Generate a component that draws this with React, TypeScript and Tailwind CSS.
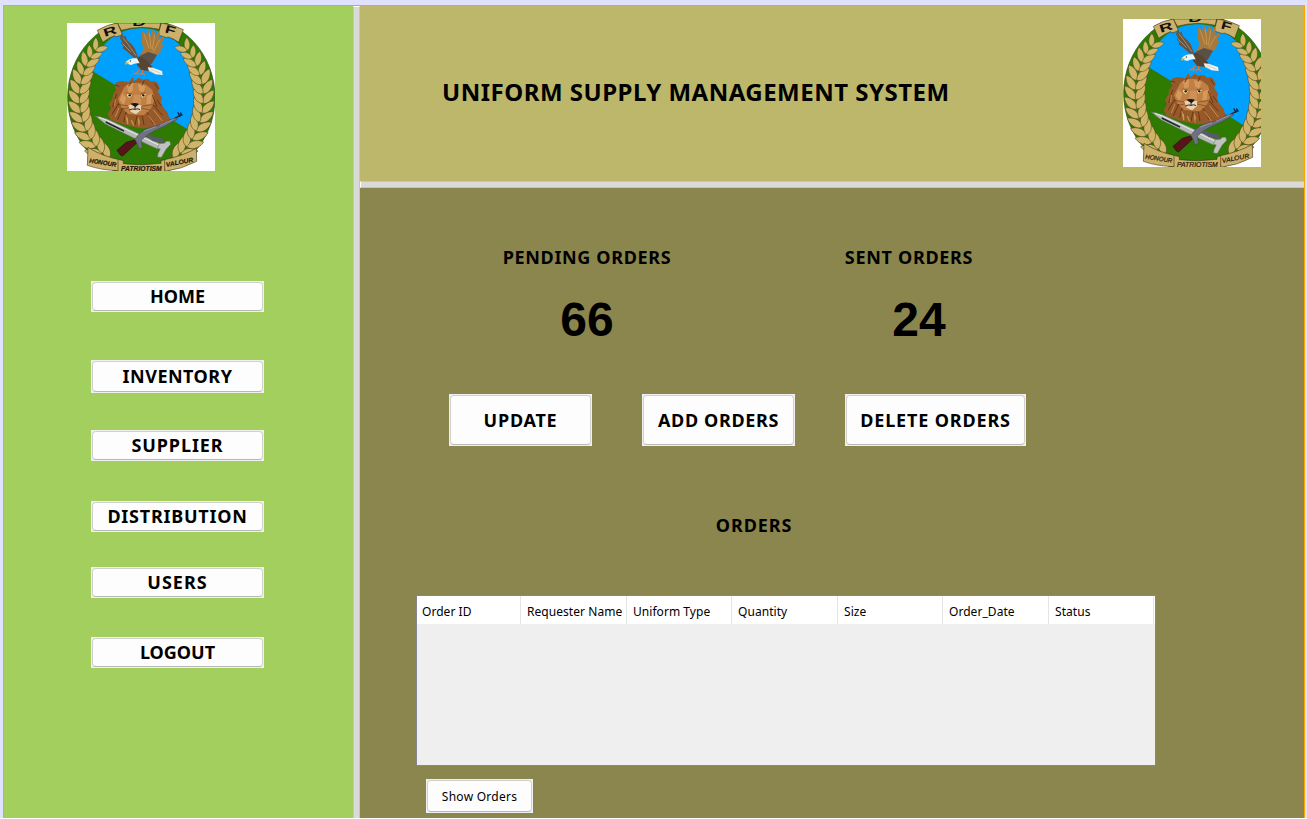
import React from "react";

type Leaf = { x: number; y: number; a: number; k: number };

const LEAVES: Leaf[] = [];
for (let i = 0; i < 14; i++) {
  const deg = -58 + i * 7.7;
  const t = (deg * Math.PI) / 180;
  const x = 244 - 185 * Math.cos(t);
  const y = 250 - 214 * Math.sin(t);
  const a = (Math.atan2(214 * Math.cos(t), 185 * Math.sin(t)) * 180) / Math.PI;
  LEAVES.push({ x, y, a, k: i > 11 ? 0.75 : i > 9 ? 0.88 : 1 });
}

const LEAF = "M0 0C6 -15 30 -21 52 -7C38 10 12 13 0 0Z";

function Branch() {
  return (
    <g fill="#d0b468" stroke="#4a431f" strokeWidth="1.6">
      {LEAVES.map((l, i) => (
        <g key={i} transform={`translate(${l.x} ${l.y}) rotate(${-l.a}) scale(${l.k})`}>
          <path d={LEAF} transform="rotate(-29)" />
          <path d={LEAF} transform="rotate(29) scale(1 -1)" />
        </g>
      ))}
    </g>
  );
}

function Emblem({ className, viewBox }: { className: string; viewBox: string }) {
  return (
    <svg className={className} viewBox={viewBox} fontFamily="Liberation Sans, sans-serif">
      <rect x="21" y="24" width="444" height="444" fill="#fff" />
      <ellipse cx="244" cy="247" rx="221" ry="237" fill="#2f7a00" stroke="#234d10" strokeWidth="2" />
      <path d="M92 165C112 100 160 40 244 40C340 40 420 130 420 250C420 290 410 330 400 353Z" fill="#00a0ff" />
      <Branch />
      <g transform="translate(488 0) scale(-1 1)">
        <Branch />
      </g>

      <g stroke="#3b3215" strokeWidth="1.8" fill="#cdb069">
        <path d="M172 24L302 24L298 43Q240 30 184 46Z" />
        <path d="M112 46Q142 28 172 24L188 60L166 66L164 62Q146 68 128 82Z" />
        <path d="M304 24Q340 28 370 44L356 82Q340 70 324 66L320 68L294 60Z" />
      </g>
      <g fontWeight="bold" fontSize="34" fill="#111">
        <text transform="translate(134 66) rotate(-18)" textLength="40" lengthAdjust="spacingAndGlyphs">R</text>
        <text x="217" y="34" textLength="41" lengthAdjust="spacingAndGlyphs">D</text>
        <text transform="translate(313 52) rotate(16)" textLength="32" lengthAdjust="spacingAndGlyphs">F</text>
      </g>

      <g>
        <path d="M184 56L192 66L196 61L201 76L213 86L224 100L234 126L222 128L202 110L187 99L191 94L181 85L187 81L180 70Z" fill="#665443" />
        <path d="M188 68L204 88L228 122M186 84L212 110" stroke="#a98b66" strokeWidth="3" fill="none" />
        <path d="M239 124L250 101L244 78L246 52L252 48L257 66L262 44L269 47L270 66L278 45L285 48L284 69L295 49L300 54L295 76L309 64L313 70L302 89L313 88L301 105L303 111L287 124L276 146L253 151Z" fill="#a8793d" />
        <path d="M252 56L267 100M268 54L273 102M284 58L277 104M299 74L280 110" stroke="#c59552" strokeWidth="3" fill="none" />
        <path d="M240 122L264 111L291 119L275 146L252 151Z" fill="#5b5048" />
        <path d="M224 131L240 124L264 140L278 156L268 168L245 166L232 151Z" fill="#594430" />
        <path d="M197 141Q209 127 231 130L239 145Q223 143 214 150L203 147Z" fill="#e9f5fa" />
        <path d="M194 143L207 141L204 147L196 149Z" fill="#dba92d" />
        <circle cx="211" cy="138" r="2" fill="#234" />
        <path d="M263 157L278 158L306 168L308 180L286 178L267 168Z" fill="#f6f0e2" />
        <path d="M272 162L302 175M268 166L286 177" stroke="#aaa" strokeWidth="1.5" />
        <path d="M236 165L232 173L220 177M234 172L232 181M248 165L247 174L238 179M247 174L255 181" fill="none" stroke="#db7544" strokeWidth="4" />
      </g>

      <path d="M187 198L207 202L218 187L222 199L236 188L248 194L265 192L271 199Q295 194 299 221L294 230L306 249L302 260L309 276L323 294L329 314L306 338L240 340L209 333L184 326L152 314L143 298L153 279L147 266L157 252L160 236L169 225Q158 210 171 201Z" fill="#96592a" />
      <path d="M193 216Q220 195 258 209L277 225L284 255L271 284L251 301L205 297L184 277L174 252Z" fill="#c08045" />
      <path d="M200 210L220 204L218 228L206 234ZM234 207L257 213L250 232L238 228ZM187 235L199 249L191 270L179 255ZM261 242L276 236L272 267L259 268Z" fill="#d4995b" />
      <path d="M165 210L178 214M284 205L295 222M170 236L158 276M176 265L156 298M188 279L172 315M198 291L191 321M277 240L291 276M279 269L307 301M261 292L279 326M247 302L252 331M231 303L225 330M291 255L303 272M214 202L206 214M253 196L246 211" stroke="#6b3716" strokeWidth="3" fill="none" />
      <path d="M166 252L164 274M177 278L166 306M197 301L202 321M280 284L307 318M265 301L286 330M235 308L237 334" stroke="#c98e50" strokeWidth="3" fill="none" />
      <path d="M222 239L241 239L244 266L218 267Z" fill="#cb9158" />
      <path d="M205 271Q222 264 245 271L242 286L228 298L212 290Z" fill="#e6d3b4" />
      <path d="M211 266Q226 261 237 267L226 277Z" fill="#181513" />
      <path d="M225 276V283M208 285Q218 280 225 283Q234 279 240 284" fill="none" stroke="#38221a" strokeWidth="3" />
      <path d="M202 235L216 241L209 249L201 243ZM243 241L257 236L255 244L247 248Z" fill="#f3df9d" />
      <circle cx="209" cy="241" r="3.5" fill="#16110c" />
      <circle cx="250" cy="241" r="3.5" fill="#16110c" />
      <path d="M199 234L215 237M242 237L257 233M205 273L174 268M206 279L181 283M243 274L276 269M243 279L273 286" stroke="#5a3014" strokeWidth="1.5" />
      <path d="M202 308L203 328M214 316L221 331M236 314L238 325" stroke="#b7a43c" strokeWidth="4" />

      <path d="M106 303L140 311L226 351L300 386L292 402L215 366L136 327Z" fill="#b4b8b6" stroke="#6b706f" strokeWidth="1.5" />
      <path d="M116 306L140 316L221 354L298 391" stroke="#e9ecea" strokeWidth="3" fill="none" />
      <path d="M137 321L192 348" stroke="#222a29" strokeWidth="5" />
      <path d="M298 386L313 385L319 379L329 379L332 388L318 403L304 427L293 426L294 416L301 402L292 400Z" fill="#bfc2c1" stroke="#747978" strokeWidth="1.5" />
      <path d="M171 406L199 382L226 374L229 385L188 423L181 420Z" fill="#581519" stroke="#271013" strokeWidth="2" />
      <path d="M224 373L240 354L259 341L304 328L349 306L353 312L314 334L290 344L265 358L244 375L247 398L237 401L231 384Z" fill="#707085" stroke="#3f414d" strokeWidth="1.5" />
      <path d="M257 362L268 358L281 365L309 371L309 384L278 378Z" fill="#59586f" />
      <path d="M251 349L288 335M300 331L340 313" stroke="#9c9daa" strokeWidth="2.5" />
      <path d="M346 309L366 298M353 292L361 305M361 293L367 302" stroke="#142035" strokeWidth="4" />

      <g stroke="#3b3215" strokeWidth="1.8" fill="#cdb069">
        <path d="M84 397Q124 423 182 435L176 467Q124 466 82 451Z" />
        <path d="M409 400Q366 424 308 435L315 469Q364 463 410 439Z" />
        <path d="M174 433L190 437L190 446Q246 453 303 445L303 437L314 434L314 475L174 475Z" />
      </g>
      <g fontStyle="italic" fontSize="19" fill="#1c180a" stroke="#1c180a" strokeWidth="0.6">
        <text transform="translate(87 443) rotate(9)" textLength="82" lengthAdjust="spacingAndGlyphs">HONOUR</text>
        <text x="183" y="469" textLength="122" lengthAdjust="spacingAndGlyphs">PATRIOTISM</text>
        <text transform="translate(319 456) rotate(-11)" textLength="83" lengthAdjust="spacingAndGlyphs">VALOUR</text>
      </g>
    </svg>
  );
}

function Button({ label, className, spacing = "" }: { label: string; className: string; spacing?: string }) {
  return (
    <button className={`block shrink-0 bg-[#f0f0f0] p-px ${className}`}>
      <span className="flex h-full w-full items-center justify-center rounded-[4px] border border-[#d0d0d0] border-b-[#b8b8b8] bg-[#fdfdfd]">
        <span className={`whitespace-nowrap ${spacing}`}>{label}</span>
      </span>
    </button>
  );
}

const NAV = [
  { label: "HOME", box: "h-[31px]", spacing: "pb-0.5" },
  { label: "INVENTORY", box: "mt-12 h-[33px]", spacing: "pb-0.5 tracking-[0.5px]" },
  { label: "SUPPLIER", box: "mt-[37px] h-[31px]", spacing: "pb-0.5 tracking-[0.9px]" },
  { label: "DISTRIBUTION", box: "mt-10 h-[31px]", spacing: "pb-0.5 tracking-[0.75px]" },
  { label: "USERS", box: "mt-[35px] h-[31px]", spacing: "pb-0.5 tracking-[1px]" },
  { label: "LOGOUT", box: "mt-[39px] h-[31px]", spacing: "pb-0.5" },
];

const COLUMNS = [
  { label: "Order ID", box: "w-[104px] pl-[5px]" },
  { label: "Requester Name", box: "w-[106px] pl-[6px]" },
  { label: "Uniform Type", box: "w-[105px] pl-[6px]" },
  { label: "Quantity", box: "w-[106px] pl-[6px]" },
  { label: "Size", box: "w-[105px] pl-[6px]" },
  { label: "Order_Date", box: "w-[106px] pl-[6px]" },
  { label: "Status", box: "w-[105px] pl-[6px]" },
];

export default function App() {
  return (
    <div className="h-[819px] w-[1307px] overflow-hidden border-b border-white bg-[#e0e0ff] pt-[5px] pr-[2px] pl-[3px] font-['Noto_Sans',sans-serif] text-black">
      <div className="flex h-[813px] border-x border-t border-[#ffa500]">
        <aside className="h-full w-[349px] shrink-0 bg-[#a3cf5f] pt-[17px] text-[18px] leading-[24px] font-bold">
          <Emblem className="ml-[63px] block size-[148px]" viewBox="21 24 444 444" />
          <nav className="mt-[110px] ml-[87px] flex w-[173px] flex-col">
            {NAV.map((n) => (
              <Button key={n.label} label={n.label} className={n.box} spacing={n.spacing} />
            ))}
          </nav>
        </aside>
        <div className="w-[7px] shrink-0 border-x border-t border-x-[#c4c4c4] border-t-white bg-[#dadada]" />
        <main className="flex h-full min-w-0 flex-1 flex-col">
          <header className="flex h-[175px] shrink-0 justify-between bg-[#bdb76b] pt-[13px] pr-[43px] pl-[82px]">
            <h1 className="mt-[57px] h-8 text-[24px] leading-8 font-bold tracking-[0.5px] whitespace-nowrap">
              UNIFORM SUPPLY MANAGEMENT SYSTEM
            </h1>
            <Emblem className="block h-[148px] w-[138px] shrink-0" viewBox="21 24 414 444" />
          </header>
          <div className="h-[7px] shrink-0 border-y border-l border-y-[#c4c4c4] border-l-white bg-[#dadada]" />
          <section className="min-h-0 flex-1 bg-[#8b864e] text-[18px] leading-6 font-bold">
            <div className="flex pt-[57px]">
              <div className="ml-[127px] w-[200px] text-center">
                <h2 className="tracking-[0.65px]">PENDING ORDERS</h2>
                <p className="mt-[23px] font-['Liberation_Sans',sans-serif] text-[48px] leading-[56px]">66</p>
              </div>
              <div className="ml-[122px] w-[200px] text-center">
                <h2 className="tracking-[0.7px]">SENT ORDERS</h2>
                <p className="mt-[23px] ml-5 font-['Liberation_Sans',sans-serif] text-[48px] leading-[56px]">24</p>
              </div>
            </div>
            <div className="mt-[46px] ml-[89px] flex">
              <Button label="UPDATE" className="h-[52px] w-[143px]" spacing="tracking-[0.75px]" />
              <Button label="ADD ORDERS" className="ml-[50px] h-[52px] w-[153px]" spacing="tracking-[0.65px]" />
              <Button label="DELETE ORDERS" className="ml-[50px] h-[52px] w-[181px]" spacing="tracking-[0.85px]" />
            </div>
            <h2 className="mt-[67px] ml-[294px] w-[200px] text-center tracking-[0.9px]">ORDERS</h2>
            <div className="mt-[58px] ml-[56px] h-[171px] w-[740px] border border-[#828790] bg-[#efefef] text-[12px] leading-4 font-normal">
              <div className="flex h-7 bg-white">
                {COLUMNS.map((c) => (
                  <div key={c.label} className={`flex shrink-0 items-center border-r border-[#e5e5e5] pt-[3px] tracking-[0.05px] whitespace-nowrap ${c.box}`}>
                    {c.label}
                  </div>
                ))}
              </div>
            </div>
            <Button label="Show Orders" className="mt-[13px] ml-[66px] h-[34px] w-[107px] text-[12px] leading-4 font-normal" spacing="pt-0.5 tracking-[0.25px]" />
          </section>
        </main>
      </div>
    </div>
  );
}
